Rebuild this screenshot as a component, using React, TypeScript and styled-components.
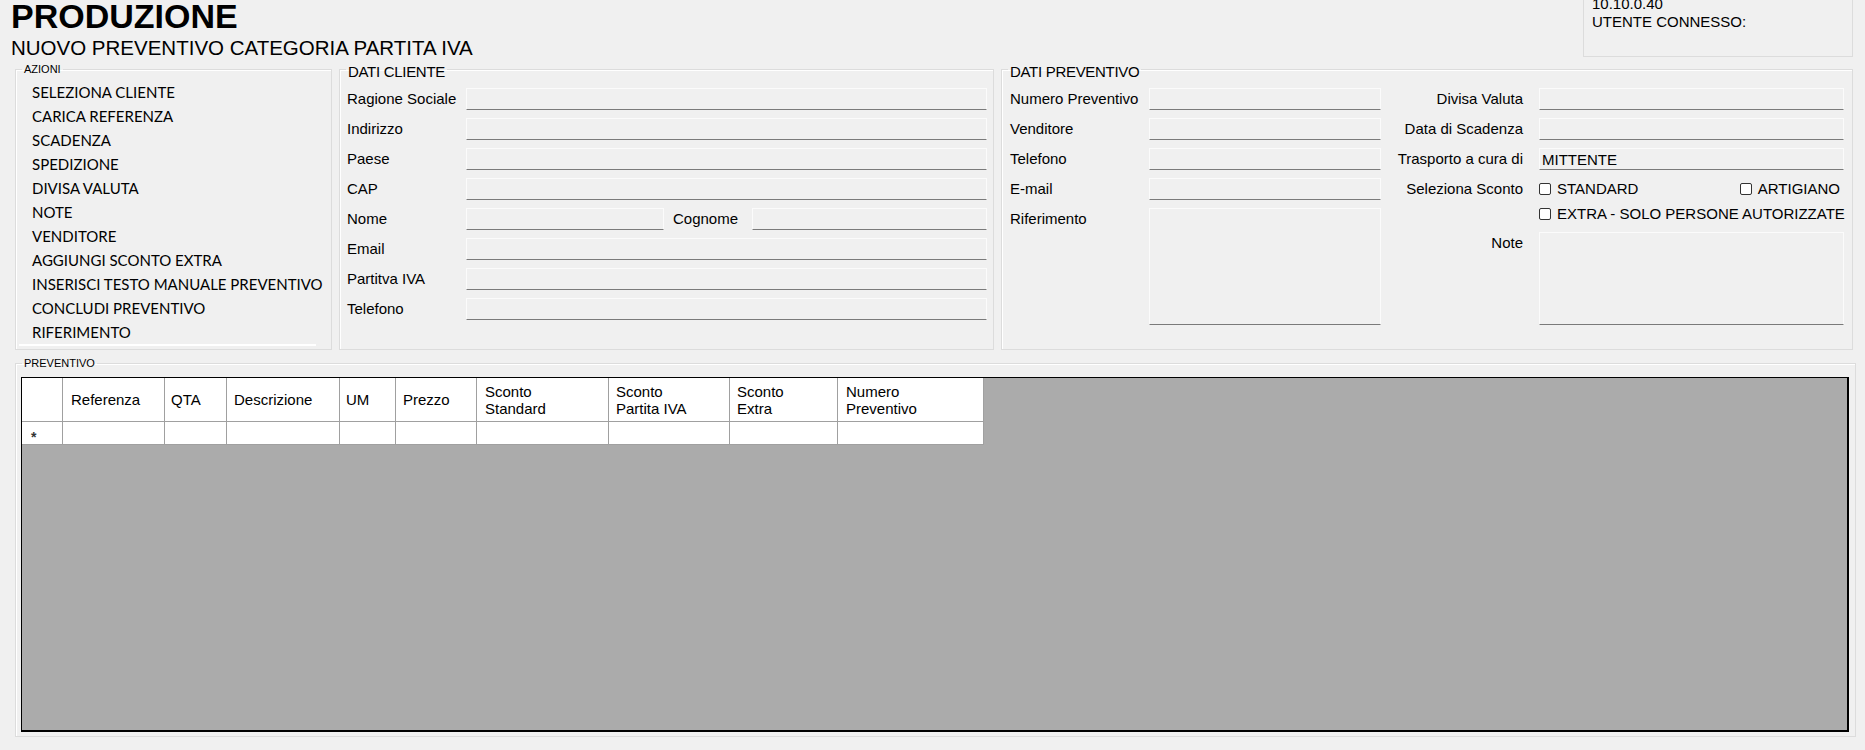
import React, { FC } from 'react';
import styled, { createGlobalStyle } from 'styled-components';

const GlobalStyle = createGlobalStyle`
    html, body {
        margin: 0;
        padding: 0;
        background: #f0f0f0;
    }
    body {
        width: 1865px;
        height: 750px;
        overflow: hidden;
        font-family: 'Liberation Sans', Arial, sans-serif;
        color: #000;
    }
    * {
        box-sizing: border-box;
    }
`;

const Page = styled.div`
    width: 1865px;
    height: 750px;
    display: flex;
    flex-direction: column;
`;

const Header = styled.header`
    height: 58px;
    display: flex;
    justify-content: space-between;
    align-items: flex-start;
    padding: 0 12px 0 11px;
`;

const Title = styled.h1`
    margin: 0;
    font: bold 34px/33px 'Liberation Sans', Arial, sans-serif;
`;

const Subtitle = styled.h2`
    margin: 5px 0 0;
    font: normal 20.5px/20px 'Liberation Sans', Arial, sans-serif;
`;

const InfoBox = styled.div`
    width: 270px;
    height: 57px;
    border: 1px solid #dcdcdc;
    border-top: none;
    padding-left: 8px;
    overflow: hidden;
    font-size: 15px;
    line-height: 18px;
`;

const InfoText = styled.div`
    margin-top: -5px;
`;

const GroupsRow = styled.div`
    display: flex;
    column-gap: 7px;
    padding-left: 15px;
    height: 292px;
`;

const Group = styled.fieldset<{ $w: number; $h: number }>`
    margin: 0;
    padding: 0;
    min-width: 0;
    width: ${({ $w }) => $w}px;
    height: ${({ $h }) => $h}px;
    border: 1px solid #dcdcdc;
    box-shadow: inset 1px 1px 0 #fff;
`;

const Legend = styled.legend<{ $small?: boolean }>`
    margin-left: 6px;
    padding: ${({ $small }) => ($small ? '0 2px' : '6px 2px 0')};
    height: 22px;
    line-height: ${({ $small }) => ($small ? '22px' : '16px')};
    font-size: ${({ $small }) => ($small ? '11px' : '15px')};
    letter-spacing: ${({ $small }) => ($small ? '0' : '-0.3px')};
`;

const ActionList = styled.ul`
    list-style: none;
    margin: 0;
    padding: 0;
`;

const ActionItem = styled.li`
    padding-left: 16px;
    height: 24px;
    font: 15px/24px Lato, 'Open Sans', sans-serif;
    white-space: nowrap;
`;

const ListEdge = styled.div`
    margin-left: 3px;
    width: 297px;
    height: 2px;
    background: #fff;
`;

const ClienteBody = styled.div`
    display: grid;
    grid-template-columns: 119px 521px;
    grid-auto-rows: 22px;
    row-gap: 8px;
    padding: 8px 0 0 7px;
`;

const Label = styled.label<{ $right?: boolean; $top?: boolean }>`
    font-size: 15px;
    line-height: 22px;
    white-space: nowrap;
    text-align: ${({ $right }) => ($right ? 'right' : 'left')};
    align-self: ${({ $top }) => ($top ? 'start' : 'center')};
`;

const NoteLabel = styled(Label)`
    margin-top: 4px;
`;

const TextBox = styled.input`
    display: block;
    width: 100%;
    height: 22px;
    margin: 0;
    padding: 0 2px;
    background: #f0f0f0;
    border: 1px solid #fbfbfb;
    border-bottom-color: #7a7a7a;
    border-radius: 0;
    outline: none;
    font: 15px/20px 'Liberation Sans', Arial, sans-serif;
    color: #000;
`;

const TextArea = styled.textarea<{ $h: number }>`
    display: block;
    width: 100%;
    height: ${({ $h }) => $h}px;
    margin: ${({ $h }) => ($h < 100 ? '4px 0 0' : '0')};
    padding: 2px;
    resize: none;
    background: #f0f0f0;
    border: 1px solid #fbfbfb;
    border-bottom-color: #7a7a7a;
    border-radius: 0;
    outline: none;
    font: 15px 'Liberation Sans', Arial, sans-serif;
`;

const NameRow = styled.div`
    display: flex;
    align-items: center;
`;

const NameBox = styled.div<{ $w?: number }>`
    width: ${({ $w }) => ($w ? `${$w}px` : 'auto')};
    flex: ${({ $w }) => ($w ? 'none' : '1')};
`;

const InlineLabel = styled.label`
    width: 88px;
    padding-left: 9px;
    font-size: 15px;
    line-height: 22px;
`;

const PreventivoBody = styled.div`
    display: flex;
    padding: 8px 8px 0;
`;

const LeftCol = styled.div`
    display: grid;
    grid-template-columns: 139px 232px;
    grid-template-rows: 22px 22px 22px 22px 117px;
    row-gap: 8px;
`;

const RightCol = styled.div`
    display: grid;
    grid-template-columns: 142px 305px;
    grid-template-rows: 22px 22px 22px 22px 12px 97px;
    column-gap: 16px;
    row-gap: 8px;
`;

const CheckRow = styled.div<{ $spread?: boolean }>`
    display: flex;
    align-items: center;
    justify-content: ${({ $spread }) => ($spread ? 'space-between' : 'flex-start')};
    padding-right: 4px;
`;

const Check = styled.label`
    display: flex;
    align-items: center;
    gap: 6px;
    font-size: 15px;
    line-height: 18px;
    white-space: nowrap;
`;

const CheckBox = styled.span`
    width: 12px;
    height: 12px;
    border: 1px solid #333;
    border-radius: 2px;
    background: #fff;
`;

const GridGroup = styled(Group)`
    margin: 2px 0 0 15px;
`;

const GridArea = styled.div`
    margin: 3px 6px 0 5px;
    height: 355px;
    background: #ababab;
    border: 1px solid #000;
    border-right-width: 2px;
    border-bottom-width: 2px;
`;

const Table = styled.table`
    border-collapse: separate;
    border-spacing: 0;
    table-layout: fixed;
    width: 962px;
    background: #fff;
`;

const HeadCell = styled.th<{ $w: number; $pad: number }>`
    width: ${({ $w }) => $w}px;
    height: 44px;
    padding: 0 2px 0 ${({ $pad }) => $pad}px;
    border-right: 1px solid #a0a0a0;
    border-bottom: 1px solid #a0a0a0;
    text-align: left;
    vertical-align: middle;
    font-weight: normal;
    font-size: 15px;
    line-height: 17px;
`;

const Cell = styled.td`
    height: 23px;
    padding: 0;
    border-right: 1px solid #a0a0a0;
    border-bottom: 1px solid #a0a0a0;
`;

const RowMarker = styled(Cell)`
    padding: 7px 0 0 9px;
    font-size: 14px;
    font-weight: bold;
    line-height: 14px;
    color: #333;
    vertical-align: middle;
`;

const actions = [
    'SELEZIONA CLIENTE',
    'CARICA REFERENZA',
    'SCADENZA',
    'SPEDIZIONE',
    'DIVISA VALUTA',
    'NOTE',
    'VENDITORE',
    'AGGIUNGI SCONTO EXTRA',
    'INSERISCI TESTO MANUALE PREVENTIVO',
    'CONCLUDI PREVENTIVO',
    'RIFERIMENTO',
];

const columns = [
    { w: 102, pad: 8, label: ['Referenza'] },
    { w: 62, pad: 6, label: ['QTA'] },
    { w: 113, pad: 7, label: ['Descrizione'] },
    { w: 56, pad: 6, label: ['UM'] },
    { w: 81, pad: 7, label: ['Prezzo'] },
    { w: 132, pad: 8, label: ['Sconto', 'Standard'] },
    { w: 121, pad: 7, label: ['Sconto', 'Partita IVA'] },
    { w: 108, pad: 7, label: ['Sconto', 'Extra'] },
    { w: 146, pad: 8, label: ['Numero', 'Preventivo'] },
];

const App: FC = () => {
    return (
        <Page>
            <GlobalStyle />
            <Header>
                <div>
                    <Title>PRODUZIONE</Title>
                    <Subtitle>NUOVO PREVENTIVO CATEGORIA PARTITA IVA</Subtitle>
                </div>
                <InfoBox>
                    <InfoText>
                        10.10.0.40
                        <br />
                        UTENTE CONNESSO:
                    </InfoText>
                </InfoBox>
            </Header>

            <GroupsRow>
                <Group $w={317} $h={292}>
                    <Legend $small>AZIONI</Legend>
                    <ActionList>
                        {actions.map((a) => (
                            <ActionItem key={a}>{a}</ActionItem>
                        ))}
                    </ActionList>
                    <ListEdge />
                </Group>

                <Group $w={655} $h={292}>
                    <Legend>DATI CLIENTE</Legend>
                    <ClienteBody>
                        <Label>Ragione Sociale</Label>
                        <TextBox readOnly />
                        <Label>Indirizzo</Label>
                        <TextBox readOnly />
                        <Label>Paese</Label>
                        <TextBox readOnly />
                        <Label>CAP</Label>
                        <TextBox readOnly />
                        <Label>Nome</Label>
                        <NameRow>
                            <NameBox $w={198}>
                                <TextBox readOnly />
                            </NameBox>
                            <InlineLabel>Cognome</InlineLabel>
                            <NameBox>
                                <TextBox readOnly />
                            </NameBox>
                        </NameRow>
                        <Label>Email</Label>
                        <TextBox readOnly />
                        <Label>Partitva IVA</Label>
                        <TextBox readOnly />
                        <Label>Telefono</Label>
                        <TextBox readOnly />
                    </ClienteBody>
                </Group>

                <Group $w={852} $h={292}>
                    <Legend>DATI PREVENTIVO</Legend>
                    <PreventivoBody>
                        <LeftCol>
                            <Label>Numero Preventivo</Label>
                            <TextBox readOnly />
                            <Label>Venditore</Label>
                            <TextBox readOnly />
                            <Label>Telefono</Label>
                            <TextBox readOnly />
                            <Label>E-mail</Label>
                            <TextBox readOnly />
                            <Label $top>Riferimento</Label>
                            <TextArea readOnly $h={117} />
                        </LeftCol>
                        <RightCol>
                            <Label $right>Divisa Valuta</Label>
                            <TextBox readOnly />
                            <Label $right>Data di Scadenza</Label>
                            <TextBox readOnly />
                            <Label $right>Trasporto a cura di</Label>
                            <TextBox readOnly value="MITTENTE" />
                            <Label $right>Seleziona Sconto</Label>
                            <CheckRow $spread>
                                <Check>
                                    <CheckBox />
                                    STANDARD
                                </Check>
                                <Check>
                                    <CheckBox />
                                    ARTIGIANO
                                </Check>
                            </CheckRow>
                            <span />
                            <CheckRow>
                                <Check>
                                    <CheckBox />
                                    EXTRA - SOLO PERSONE AUTORIZZATE
                                </Check>
                            </CheckRow>
                            <NoteLabel $right $top>
                                Note
                            </NoteLabel>
                            <TextArea readOnly $h={93} />
                        </RightCol>
                    </PreventivoBody>
                </Group>
            </GroupsRow>

            <GridGroup $w={1841} $h={385}>
                <Legend $small>PREVENTIVO</Legend>
                <GridArea>
                    <Table>
                        <thead>
                            <tr>
                                <HeadCell $w={41} $pad={0} />
                                {columns.map((c) => (
                                    <HeadCell key={c.label.join(' ')} $w={c.w} $pad={c.pad}>
                                        {c.label.map((line, i) => (
                                            <React.Fragment key={line}>
                                                {i > 0 && <br />}
                                                {line}
                                            </React.Fragment>
                                        ))}
                                    </HeadCell>
                                ))}
                            </tr>
                        </thead>
                        <tbody>
                            <tr>
                                <RowMarker>*</RowMarker>
                                {columns.map((c) => (
                                    <Cell key={c.label.join(' ')} />
                                ))}
                            </tr>
                        </tbody>
                    </Table>
                </GridArea>
            </GridGroup>
        </Page>
    );
};

export default App;
